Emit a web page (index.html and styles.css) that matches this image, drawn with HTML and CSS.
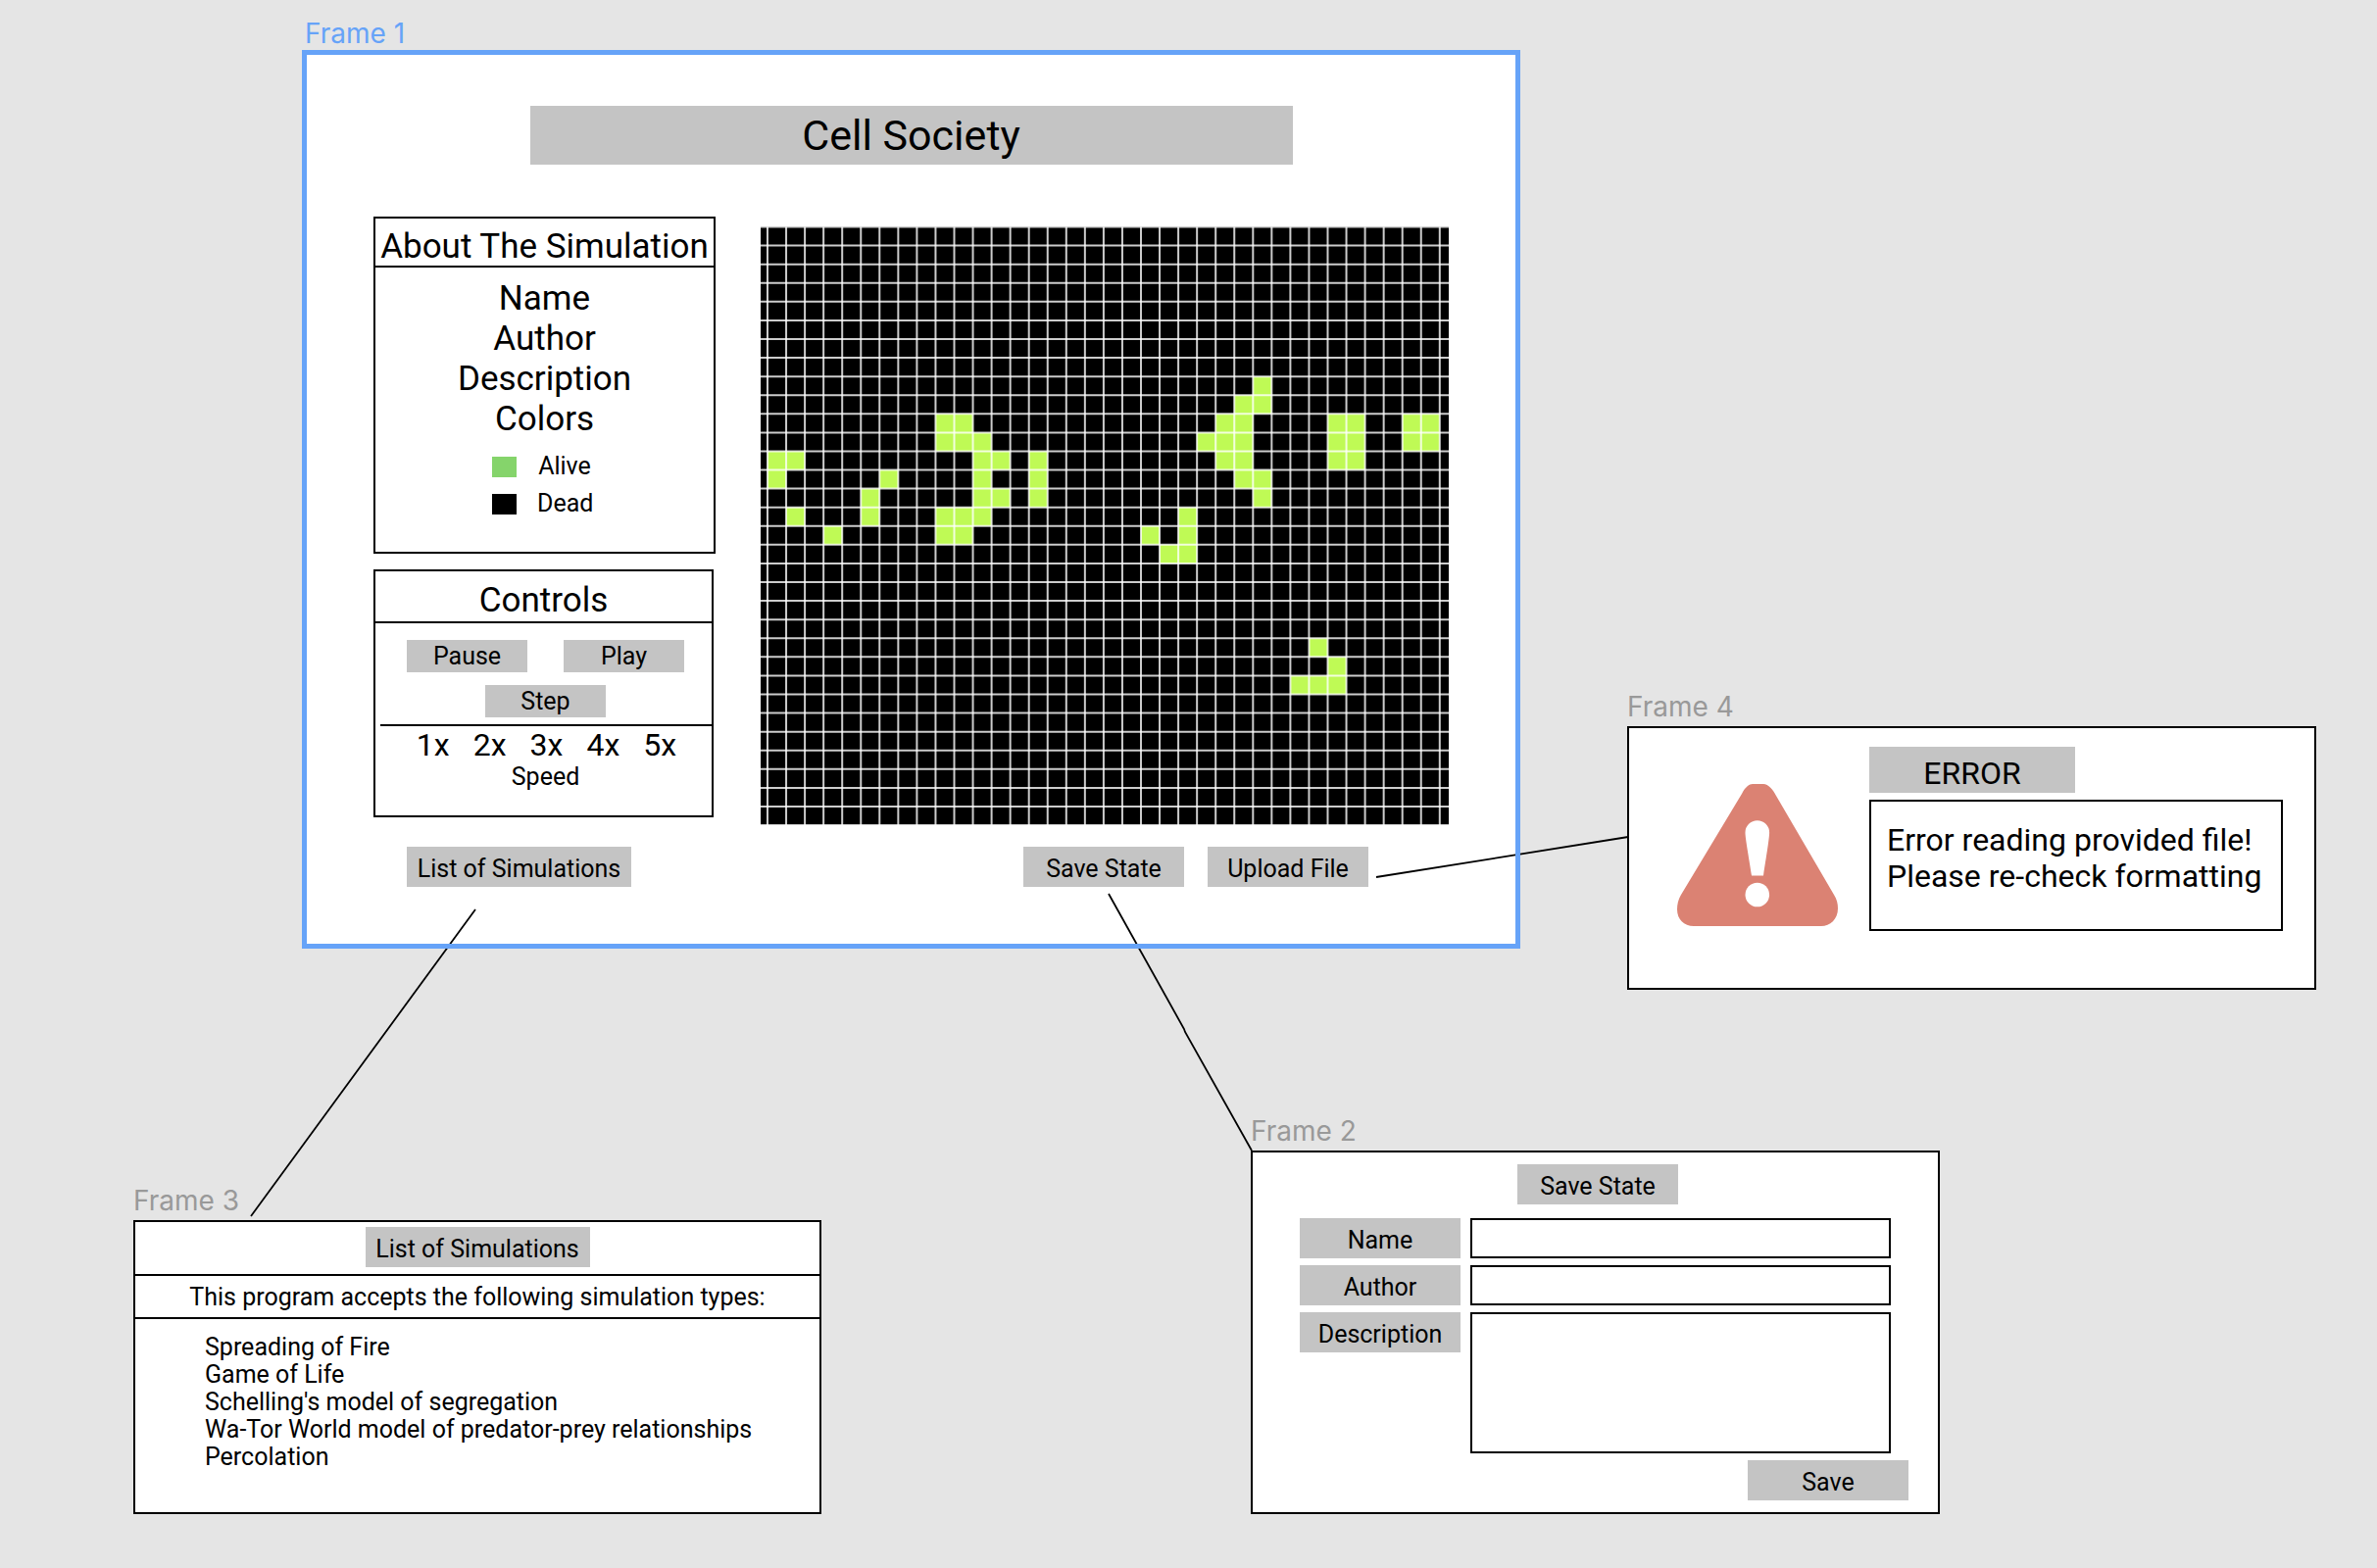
FILE: index.html
```html
<!DOCTYPE html>
<html lang="en">
<head>
<meta charset="utf-8">
<title>Cell Society wireframes</title>
<link rel="stylesheet" href="styles.css">
</head>
<body>
<main class="canvas">

  <section class="frame frame-main">
    <h2 class="frame-label">Frame 1</h2>
    <div class="frame-box">
      <h1 class="title">Cell Society</h1>
      <div class="columns">
        <div class="side">
          <section class="panel">
            <h3 class="panel-title">About The Simulation</h3>
            <ul class="facts">
              <li>Name</li>
              <li>Author</li>
              <li>Description</li>
              <li>Colors</li>
            </ul>
            <ul class="legend">
              <li><span class="swatch alive"></span><span>Alive</span></li>
              <li><span class="swatch dead"></span><span>Dead</span></li>
            </ul>
          </section>
          <section class="panel controls">
            <h3 class="panel-title controls-title">Controls</h3>
            <div class="buttons">
              <button class="small" type="button">Pause</button>
              <button class="small" type="button">Play</button>
              <button class="small" type="button">Step</button>
            </div>
            <hr class="rule">
            <div class="speeds">
              <button type="button">1x</button>
              <button type="button">2x</button>
              <button type="button">3x</button>
              <button type="button">4x</button>
              <button type="button">5x</button>
            </div>
            <p class="speed-label">Speed</p>
          </section>
          <button class="tag wide list-button" type="button">List of Simulations</button>
        </div>
        <div class="stage">
          <svg class="world" viewBox="0 0 702 611" role="img" aria-label="Simulation grid">
            <rect width="702" height="611" fill="#000"/>
            <g transform="translate(7 .5) scale(19.05 19.08)">
              <path fill="#bffa55" d="M0 12h2v1h-1v1h-1zM1 15h1v1h-1zM3 16h1v1h-1zM5 14h1v2h-1zM6 13h1v1h-1zM9 10h2v1h1v1h1v1h-1v1h1v1h-1v1h-1v1h-2v-2h2v-3h-2zM14 12h1v3h-1zM26 8h1v2h-1v3h1v2h-1v-1h-1v-1h-1v-1h-1v-1h1v-1h1v-1h1zM30 10h2v3h-2zM34 10h2v2h-2zM22 15h1v3h-2v-1h1zM20 16h1v1h-1zM29 22h1v1h-1zM30 23h1v2h-3v-1h2z"/>
              <path class="grid-lines" d="M0 0V33M1 0V33M2 0V33M3 0V33M4 0V33M5 0V33M6 0V33M7 0V33M8 0V33M9 0V33M10 0V33M11 0V33M12 0V33M13 0V33M14 0V33M15 0V33M16 0V33M17 0V33M18 0V33M19 0V33M20 0V33M21 0V33M22 0V33M23 0V33M24 0V33M25 0V33M26 0V33M27 0V33M28 0V33M29 0V33M30 0V33M31 0V33M32 0V33M33 0V33M34 0V33M35 0V33M36 0V33"/>
              <path class="grid-lines" d="M-1 0H37M-1 1H37M-1 2H37M-1 3H37M-1 4H37M-1 5H37M-1 6H37M-1 7H37M-1 8H37M-1 9H37M-1 10H37M-1 11H37M-1 12H37M-1 13H37M-1 14H37M-1 15H37M-1 16H37M-1 17H37M-1 18H37M-1 19H37M-1 20H37M-1 21H37M-1 22H37M-1 23H37M-1 24H37M-1 25H37M-1 26H37M-1 27H37M-1 28H37M-1 29H37M-1 30H37M-1 31H37M-1 32H37"/>
            </g>
          </svg>
          <div class="stage-actions">
            <button class="tag" type="button">Save State</button>
            <button class="tag" type="button">Upload File</button>
          </div>
        </div>
      </div>
    </div>
  </section>

  <section class="frame frame-error">
    <h2 class="frame-label">Frame 4</h2>
    <div class="frame-box outlined error">
      <svg class="warning" viewBox="0 0 164 146" role="img" aria-label="Warning">
        <path fill="#db8273" d="M77 0h11c5 0 10 6 13 12l59 101c3 5 4 9 4 14 0 11-8 18-17 18H17C7 145 0 138 0 128c0-5 1-10 4-15L66 10C69 4 73 0 77 0z"/>
        <path fill="#fff" d="M69.500 49.500a12.300 12.300 0 0 1 24.600 0c0 6-3 24-6.100 44H76c-3-20-6.500-38-6.500-44z"/>
        <circle cx="81.800" cy="113" r="12.300" fill="#fff"/>
      </svg>
      <div class="error-body">
        <h3 class="error-title">ERROR</h3>
        <p class="error-text">Error reading provided file!<br>Please re-check formatting</p>
      </div>
    </div>
  </section>

  <section class="frame frame-list">
    <h2 class="frame-label">Frame 3</h2>
    <div class="frame-box outlined">
      <div class="list-head"><h3 class="tag wide">List of Simulations</h3></div>
      <p class="list-intro">This program accepts the following simulation types:</p>
      <ul class="types">
        <li>Spreading of Fire</li>
        <li>Game of Life</li>
        <li>Schelling's model of segregation</li>
        <li>Wa-Tor World model of predator-prey relationships</li>
        <li>Percolation</li>
      </ul>
    </div>
  </section>

  <section class="frame frame-save">
    <h2 class="frame-label">Frame 2</h2>
    <form class="frame-box outlined save-form">
      <h3 class="tag save-title">Save State</h3>
      <div class="fields">
        <label class="tag" for="name">Name</label>
        <input class="field" id="name" type="text">
        <label class="tag" for="author">Author</label>
        <input class="field" id="author" type="text">
        <label class="tag" for="description">Description</label>
        <textarea class="field area" id="description"></textarea>
      </div>
      <button class="tag save-button" type="button">Save</button>
    </form>
  </section>

  <svg class="links" aria-hidden="true">
    <path d="M485 928L256 1241M1131 912L1208 1050L1209 1053L1277 1174M1404 895L1661 854"/>
  </svg>
</main>
</body>
</html>
```
FILE: styles.css
```css
*, *::before, *::after { box-sizing: border-box; }

body {
  margin: 0;
  background: #e5e5e5;
  color: #000;
  font-family: Roboto, "Liberation Sans", sans-serif;
  font-size: 25px;
  line-height: 28px;
}

h1, h2, h3, p, ul { margin: 0; padding: 0; font-weight: 400; }
ul { list-style: none; }
button { border: 0; padding: 0; background: none; color: inherit; font: inherit; }

/* Free canvas: every frame is pinned where it was dropped */
.canvas { position: relative; min-height: 100vh; overflow: hidden; }
.frame { position: absolute; }
.frame-main { left: 311px; top: 16px; width: 1237px; }
.frame-error { left: 1660px; top: 703px; width: 703px; }
.frame-list { left: 136px; top: 1207px; width: 702px; }
.frame-save { left: 1276px; top: 1136px; width: 703px; }

.frame-label {
  padding-bottom: 2px;
  color: #999;
  font-family: Inter, "Liberation Sans", sans-serif;
  font-size: 28px;
  line-height: 36px;
}
.frame-box { background: #fff; }
.outlined { border: 2px solid #000; }

.links { position: absolute; inset: 0; z-index: 1; width: 100%; height: 100%; pointer-events: none; }
.links path { fill: none; stroke: #000; stroke-width: 1.8; }

/* Shared grey tag, used for buttons, labels and headings */
.tag {
  display: block;
  width: 164px;
  height: 41px;
  padding-top: 5px;
  background: #c4c4c4;
  font-size: 25px;
  line-height: 36px;
  text-align: center;
}
.wide { width: 229px; }

/* Frame 1, selected */
.frame-main .frame-label { color: #66a3f8; }
.frame-main .frame-box { position: relative; padding: 54px 70px 60px; }
.frame-main .frame-box::after {
  content: "";
  position: absolute;
  inset: -3px;
  z-index: 2;
  border: 5px solid #66a3f8;
  pointer-events: none;
}
.title {
  width: 778px;
  margin: 0 auto 53px;
  background: #c4c4c4;
  font-size: 43px;
  line-height: 60px;
  text-align: center;
}
.columns { display: grid; grid-template-columns: 349px 1fr; gap: 46px; }

.panel { border: 2px solid #000; text-align: center; }
.panel-title {
  padding-top: 9px;
  border-bottom: 2px solid #000;
  font-size: 35px;
  line-height: 39px;
  white-space: nowrap;
}
.facts { padding: 11px 0 14px; font-size: 35px; line-height: 41px; }
.legend { display: grid; gap: 10px; padding: 0 0 35px 119px; }
.legend li { display: grid; grid-template-columns: 25px 56px; gap: 21px; align-items: center; }
.swatch { height: 21px; }
.alive { background: #85d46b; }
.dead { background: #000; }

.controls { width: 347px; margin-top: 16px; padding-bottom: 25px; }
.controls-title { padding: 10px 0 2px; }
.buttons {
  display: flex;
  flex-wrap: wrap;
  justify-content: center;
  gap: 13px 37px;
  padding: 17px 28px 7px 32px;
}
.small { width: 123px; height: 33px; background: #c4c4c4; }
.rule { height: 2px; margin: 0 0 0 5px; border: 0; background: #000; }
.speeds { display: flex; justify-content: center; gap: 24px; padding: 1px 0 0 6px; font-size: 32px; line-height: 37px; }
.speed-label { padding-left: 4px; }
.list-button { margin: 30px 0 0 34px; }

.stage { padding-top: 10px; }
.world { display: block; width: 100%; height: auto; }
.grid-lines { fill: none; stroke: #fff; stroke-opacity: .8; stroke-width: 2px; vector-effect: non-scaling-stroke; }
.stage-actions { display: flex; justify-content: flex-end; gap: 24px; padding: 22px 82px 0 0; }

/* Frame 4 */
.error { display: flex; gap: 32px; padding: 19px 32px 58px 49px; }
.warning { flex: none; width: 164px; height: 146px; margin-top: 38px; }
.error-body { flex: 1; }
.error-title {
  width: 210px;
  margin-bottom: 7px;
  padding-top: 8px;
  background: #c4c4c4;
  font-size: 32px;
  line-height: 39px;
  text-align: center;
}
.error-text {
  min-height: 134px;
  padding: 21px 0 0 16px;
  border: 2px solid #000;
  font-size: 32px;
  line-height: 37px;
  white-space: nowrap;
}

/* Frame 3 */
.list-head { display: flex; justify-content: center; padding: 5px 0 7px; border-bottom: 2px solid #000; }
.list-intro { padding: 8px 0 6px; border-bottom: 2px solid #000; text-align: center; }
.types { padding: 15px 0 42px 71px; }

/* Frame 2 */
.save-form { padding: 12px 30px 12px 48px; }
.save-title { margin: 0 auto 14px 222px; }
.fields { display: grid; grid-template-columns: 164px 1fr; gap: 7px 10px; padding-right: 18px; }
.field {
  width: 100%;
  height: 41px;
  margin: 0;
  padding: 4px 8px;
  border: 2px solid #000;
  border-radius: 0;
  background: #fff;
  font: inherit;
}
.area { height: 144px; resize: none; }
.save-button { margin: 7px 0 0 auto; }
```
